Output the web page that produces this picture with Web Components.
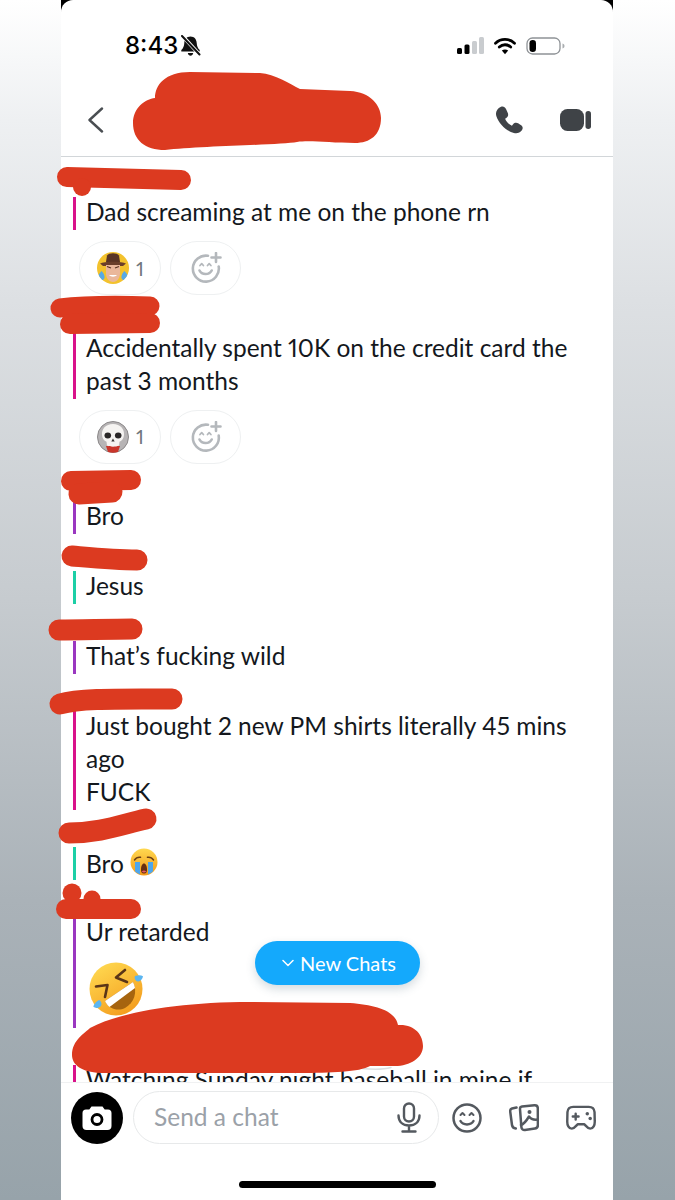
<!DOCTYPE html>
<html>
<head>
<meta charset="utf-8">
<title>Chat</title>
<style>
html,body{margin:0;padding:0}
body{width:675px;height:1200px;overflow:hidden;position:relative;font-family:Lato,"Open Sans",sans-serif;background:linear-gradient(180deg,#ffffff 0,#eef0f2 10%,#dde0e3 25%,#c6cbcf 50%,#aab2b8 75%,#97a3aa 100%)}
</style>
</head>
<body>
<x-phone>
  <x-status-bar slot="top" time="8:43"></x-status-bar>
  <x-chat-header slot="top"></x-chat-header>
  <x-message color="#d9128a">Dad screaming at me on the phone rn
    <x-reactions slot="after">
      <x-reaction count="1"><x-emoji name="bitmoji" size="32"></x-emoji></x-reaction>
      <x-reaction-add></x-reaction-add>
    </x-reactions>
  </x-message>
  <x-message color="#d9128a">Accidentally spent 10K on the credit card the past 3 months
    <x-reactions slot="after">
      <x-reaction count="1"><x-emoji name="skull" size="32"></x-emoji></x-reaction>
      <x-reaction-add></x-reaction-add>
    </x-reactions>
  </x-message>
  <x-message color="#9a37c0">Bro</x-message>
  <x-message color="#1ccfa6">Jesus</x-message>
  <x-message color="#9a37c0">That’s fucking wild</x-message>
  <x-message color="#d9128a">Just bought 2 new PM shirts literally 45 mins ago<br>FUCK</x-message>
  <x-message color="#1ccfa6" emoji>Bro <x-emoji name="cry" size="28"></x-emoji></x-message>
  <x-message color="#9a37c0">Ur retarded<x-emoji slot="media" name="rofl" size="56"></x-emoji></x-message>
  <x-message color="#d9128a">Watching Sunday night baseball in mine if</x-message>
  <x-composer slot="bottom"></x-composer>
  <x-new-chats slot="over">New Chats</x-new-chats>
</x-phone>
<x-redactions></x-redactions>
<script>
const define=(name,css,html,setup)=>{
  customElements.define(name,class extends HTMLElement{
    connectedCallback(){
      if(this.shadowRoot)return;
      const r=this.attachShadow({mode:'open'});
      const body=typeof html==='function'?html(this):html;
      r.innerHTML='<style>'+css+'</style>'+body;
      if(setup)setup(this,r);
    }
  });
};
define('x-phone',`
:host{display:block;position:absolute;left:61px;top:0;width:552px;height:1200px;background:#000}
.screen{position:relative;width:100%;height:100%;background:#fff;border-radius:12px 12px 0 0;display:flex;flex-direction:column;overflow:hidden}
.list{flex:1;min-height:0;overflow:hidden;padding-top:3px;color:#14181d}
`,`<div class="screen"><slot name="top"></slot><div class="list"><slot></slot></div><slot name="bottom"></slot><slot name="over"></slot></div>`);

define('x-status-bar',`
:host{display:flex;align-items:center;justify-content:space-between;height:30px;padding:31px 48px 23px 64px;font-family:Inter,sans-serif;color:#000}
.t{display:flex;align-items:center;gap:2px;font-size:24px;font-weight:500;line-height:30px}
.r{display:flex;align-items:center;gap:10px}
svg{display:block}
`,h=>`<div class="t"><span>${h.getAttribute('time')}</span>
<svg width="21" height="22" viewBox="0 0 21 22"><path d="M10.500 1.500c-3.800 0-6 2.800-6.200 6.400-.2 3.400-1.100 5.200-3 7.100v1.600h18.400V15c-1.900-1.900-2.800-3.700-3-7.100-.2-3.600-2.400-6.400-6.200-6.400z" fill="#111"/><path d="M7.800 18c.3 1.800 1.400 2.800 2.700 2.800s2.400-1 2.700-2.800z" fill="#111"/><path d="M3 1.500 20 20" stroke="#fff" stroke-width="3.600"/><path d="M2 1 19.500 19.500" stroke="#111" stroke-width="2" stroke-linecap="round"/></svg></div>
<div class="r">
<svg width="27" height="18" viewBox="0 0 27 18"><rect x="0" y="11" width="5" height="6" rx="1.500" fill="#000"/><rect x="7.500" y="7.500" width="5" height="9.500" rx="1.500" fill="#000"/><rect x="15" y="4" width="5" height="13" rx="1.500" fill="#c9cccf"/><rect x="22" y="0" width="5" height="17" rx="1.500" fill="#c9cccf"/></svg>
<svg width="22" height="18" viewBox="0 0 22 18" style="margin-right:0"><path d="M1.500 6.200C6.800 1.200 15.200 1.200 20.500 6.200" fill="none" stroke="#000" stroke-width="2.800" stroke-linecap="round"/><path d="M5.300 10C8.600 7 13.400 7 16.700 10" fill="none" stroke="#000" stroke-width="2.800" stroke-linecap="round"/><path d="M7.800 13.600 11 17.300l3.200-3.700c-1.900-1.500-4.500-1.500-6.400 0z" fill="#000"/></svg>
<svg width="39" height="18" viewBox="0 0 39 18"><rect x="1" y="1" width="33" height="16" rx="5.500" fill="#fff" stroke="#8e9296" stroke-width="1.300"/><rect x="3.500" y="3" width="6.500" height="12" rx="3.200" fill="#000"/><path d="M36.500 6.500c1.500.4 2 1.300 2 2.500s-.5 2.100-2 2.500z" fill="#a9adb0"/></svg>
</div>`);

define('x-chat-header',`
:host{display:flex;align-items:center;justify-content:space-between;box-sizing:border-box;height:73px;padding:0 22px 1px 26px;border-bottom:1.500px solid #d2d6d9}
.r{display:flex;align-items:center;gap:37px}
svg{display:block}
`,`<svg width="17" height="26" viewBox="0 0 17 26"><path d="M15 1.500 2.500 13 15 24.500" fill="none" stroke="#4a4e52" stroke-width="2.400" stroke-linecap="round" stroke-linejoin="round"/></svg>
<div class="r">
<svg width="28" height="28" viewBox="0 0 28 28"><path d="M6 .8C8 0 10 .8 11 3l1.800 4c.8 1.900.2 3.800-1.500 4.900l-1.200.9c1.200 3 3.700 5.600 6.800 6.900l1.200-1.500c1.300-1.500 3.300-1.900 5-.9l3 1.900c1.800 1.200 2.100 3.400.8 5-1.900 2.600-5 3.600-8 2.700C10.800 24.700 4 18 1.300 10 .2 6.300 2 2.500 6 .8z" fill="#3f4347"/></svg>
<svg width="31" height="22" viewBox="0 0 31 22"><rect x="0" y="0" width="24" height="22" rx="7.500" fill="#3f4347"/><rect x="25.500" y="2" width="5.500" height="18" rx="2.700" fill="#3f4347"/></svg>
</div>`);

define('x-message',`
:host{display:block;padding-top:37px;font-family:Lato,"Open Sans",sans-serif;font-size:24.500px;line-height:33px;color:#14181d;font-variant-numeric:proportional-nums}
.b{display:flow-root;margin-left:12px;border-left:3px solid var(--c);padding:0 26px 0 10px}
.t{margin:-2px 0 2px}
:host([emoji]) .b{height:33px}
:host([emoji]) .t{margin:0}
`,h=>`<div class="b" style="--c:${h.getAttribute('color')}"><div class="t"><slot></slot></div><slot name="media"></slot></div><slot name="after"></slot>`);

define('x-reactions',`
:host{display:flex;gap:9px;margin:11px 0 0 18px;height:54.500px}
`,`<slot></slot>`);

define('x-reaction',`
:host{box-sizing:border-box;display:flex;align-items:center;gap:7px;width:82px;height:54px;padding-left:17px;border:1.500px solid #eef0f1;border-radius:27px;font-family:Lato,sans-serif;font-size:20px;color:#70767c}
`,h=>`<slot></slot><span>${h.getAttribute('count')}</span>`);

define('x-reaction-add',`
:host{box-sizing:border-box;display:flex;align-items:center;justify-content:center;width:71px;height:54px;border:1.500px solid #eef0f1;border-radius:27px}
svg{display:block}
`,`<svg width="32" height="32" viewBox="0 0 32 32" fill="none" stroke="#b4b8bc" stroke-width="2.600" stroke-linecap="round" stroke-linejoin="round"><path d="M18 3.800A13 13 0 1 0 28.700 14.500"/><path d="M26 1v9M21.500 5.500h9"/><path d="M10 13.500l1.700-1.800 1.700 1.800M17.500 13.500l1.700-1.800 1.700 1.800" stroke-width="1.800"/><path d="M9.500 18.500c2.300 4.700 9.800 4.700 12.200 0"/></svg>`);

const emojis={
bitmoji:`<svg viewBox="0 0 32 32"><defs><clipPath id="cb"><circle cx="16" cy="16" r="16"/></clipPath></defs><g clip-path="url(#cb)"><rect width="32" height="32" fill="#f3c22d"/><path d="M10 3.500C12 .5 20 .5 22 3.500l1 6.500H9z" fill="#5a3424"/><path d="M3 11.500c4-2.500 22-2.500 26 0l-3 2.500H6z" fill="#6b3f2a"/><path d="M9 13h14v8c0 5.500-3 9-7 9s-7-3.500-7-9z" fill="#eab79a"/><path d="M10 14.500l4 1.500M22 14.500l-4 1.500" stroke="#5a3424" stroke-width="1.300"/><path d="M12 23c2 2.300 6 2.300 8 0z" fill="#fff"/><path d="M4.500 19c2 2 3.800 5 2.800 7.500-1 2.300-4.300 2.300-5.800.5C-.500 24.500 2.500 21.500 4.500 19zM27.500 19c-2 2-3.800 5-2.800 7.500 1 2.300 4.300 2.300 5.800.5 2-2.500-1-5.500-3-8z" fill="#57a9e6"/></g></svg>`,
skull:`<svg viewBox="0 0 32 32"><circle cx="16" cy="16" r="15.500" fill="#b7b4b5" stroke="#8b8889"/><path d="M9 25h14l-2 6c-3 1-7 1-10 0z" fill="#c9352b"/><path d="M16 3C8.500 3 4.500 8 5 14c.2 3.500 2 5.500 4.500 6.800l.5 3.700c3.500 1.600 8.500 1.600 12 0l.5-3.700C25 19.500 26.800 17.500 27 14c.5-6-3.500-11-11-11z" fill="#f5f3f1"/><ellipse cx="10.800" cy="14.500" rx="3.300" ry="3" fill="#2a2727"/><ellipse cx="21.200" cy="14.500" rx="3.300" ry="3" fill="#2a2727"/><path d="M16 17.500l-1.700 3h3.400z" fill="#3a3737"/></svg>`,
cry:`<svg viewBox="0 0 28 28"><defs><linearGradient id="y1" x1="0" y1="0" x2="0" y2="1"><stop offset="0" stop-color="#ffd84f"/><stop offset="1" stop-color="#f49a1a"/></linearGradient></defs><circle cx="14" cy="14" r="13.500" fill="url(#y1)"/><path d="M4.500 12c1.500-2.200 4-3 6-2.700M23.500 12c-1.500-2.200-4-3-6-2.700" fill="none" stroke="#6b3d12" stroke-width="1.500" stroke-linecap="round"/><path d="M5 14h5v12.500c-2-.7-3.800-1.800-5-3.200zM18 14h5v9.300c-1.200 1.400-3 2.500-5 3.200z" fill="#4ea6ec"/><path d="M11 21.500c0-3.500 1.300-6 3-6s3 2.500 3 6-1.300 4-3 4-3-.5-3-4z" fill="#6a2f10"/><path d="M11.800 23.500c1.100-1.300 3.300-1.300 4.400 0-.9 1.300-3.500 1.300-4.400 0z" fill="#e4596b"/></svg>`,
rofl:`<svg viewBox="0 0 56 56"><defs><linearGradient id="y2" x1=".2" y1="0" x2=".8" y2="1"><stop offset="0" stop-color="#ffd950"/><stop offset="1" stop-color="#f39a1c"/></linearGradient></defs><circle cx="28" cy="27" r="26.500" fill="url(#y2)"/><path d="M37 8 28 15.500 39 20" fill="none" stroke="#5a3517" stroke-width="2.600" stroke-linecap="round" stroke-linejoin="round"/><path d="M8 24.500 19.500 23 17 35" fill="none" stroke="#5a3517" stroke-width="2.600" stroke-linecap="round" stroke-linejoin="round"/><path d="M17 39 45 20c5 10 1 21-8 26-8 4-17-0-20-7z" fill="#a6640f"/><path d="M17 39 45 20c1 1.900 1.700 3.900 2 5.900L21.500 45c-1.900-1.700-3.500-3.700-4.500-6z" fill="#fff"/><path d="M47 14c3-1 6-1 8 .2-.3 2.500-2 4.600-4.500 5.200-2.700.500-4.700-3-3.500-5.400z" fill="#5bb5f0"/><path d="M11 38c-2.700 1.500-4.800 3.800-5.700 6.500 1.900 1.700 4.500 2 6.600.6 2.500-1.800 1.800-5.800-.9-7.100z" fill="#5bb5f0"/></svg>`
};
define('x-emoji',`
:host{display:inline-block;vertical-align:middle;line-height:0}
:host([slot=media]){display:block;padding:12px 0 10px 2px}
:host([name=cry]){vertical-align:-3px}
svg{display:block;width:var(--s);height:var(--s)}
`,h=>`<div style="--s:${h.getAttribute('size')}px">${emojis[h.getAttribute('name')]}</div>`);

define('x-composer',`
:host{display:block;box-sizing:border-box;height:118px;background:#fff;border-top:1px solid #f0f1f2;position:relative}
.row{display:flex;align-items:center;padding:8px 0 0 10px;height:53px}
.cam{flex:none;width:52px;height:52px;border-radius:50%;background:#000;display:flex;align-items:center;justify-content:center}
.input{flex:none;box-sizing:border-box;width:306px;height:53px;margin-left:10px;border:1.500px solid #e7e9ea;border-radius:27px;display:flex;align-items:center;justify-content:space-between;padding:0 17px 2px 20px;font-family:Lato,sans-serif;font-size:24.500px;color:#9ba1a8}
.input svg{margin-top:2px}
.icons{display:flex;align-items:center;gap:27px;margin-left:13px}
svg{display:block}
.home{width:197px;height:7px;border-radius:4px;background:#000;margin:37px auto 0}
`,`<div class="row">
<div class="cam"><svg width="30" height="26" viewBox="0 0 30 26"><path d="M9.500 1.500h11l2.200 3H26c2.200 0 3.500 1.300 3.500 3.500v13c0 2.500-1.500 4-4 4h-21c-2.500 0-4-1.500-4-4V8c0-2.200 1.300-3.500 3.500-3.500h3.300z" fill="#fff"/><circle cx="15" cy="14.500" r="5" fill="none" stroke="#000" stroke-width="2.800"/></svg></div>
<div class="input"><span>Send a chat</span>
<svg width="24" height="31" viewBox="0 0 24 31" fill="none" stroke="#54595f" stroke-width="2.400" stroke-linecap="round"><rect x="7" y="1.500" width="10" height="18" rx="5"/><path d="M1.500 13.500c0 6.500 4.500 10 10.500 10s10.500-3.500 10.500-10M12 23.500v6M5.500 29.500h13"/></svg></div>
<div class="icons">
<svg width="30" height="30" viewBox="0 0 30 30" fill="none" stroke="#54595f" stroke-width="2.500" stroke-linecap="round" stroke-linejoin="round"><circle cx="15" cy="15" r="13.500"/><path d="M8.500 12l2-2 2 2M17.500 12l2-2 2 2" stroke-width="2"/><path d="M8.500 18c2.500 4.500 10.500 4.500 13 0"/></svg>
<svg width="30" height="28" viewBox="0 0 30 28" fill="none" stroke="#54595f" stroke-width="2.500" stroke-linecap="round" stroke-linejoin="round"><path d="M7.500 3.500 3 4.500C1.500 5 1 6 1.200 7.500L3 21c.3 2 1.300 3.200 3.800 3.500"/><path d="M13 2.500 25.500 1.300c2-.1 3.200.8 3.300 2.700l.1 17c0 2-1 3.300-3 3.600l-10 1.400c-2 .2-3.300-.9-3.500-2.900L11 5.200c-.1-1.600.5-2.500 2-2.700z"/><path d="M12 21c3-1 5-3.500 8-8.500 2 3 5 3.500 9 3"/><circle cx="20.500" cy="8" r="2" fill="#54595f" stroke="none"/></svg>
<svg width="30" height="26" viewBox="0 0 31 26" fill="none" stroke="#54595f" stroke-width="2.500" stroke-linecap="round" stroke-linejoin="round"><path d="M7.500 1.500h16c3.500 0 5.700 2 6 5.500l.2 9c.2 4.500-1.500 8-4.700 8-2.500 0-4-2.500-6-4.500h-7c-2 2-3.500 4.500-6 4.500-3.200 0-4.900-3.500-4.700-8L1.500 7c.3-3.500 2.500-5.500 6-5.500z"/><path d="M10 8.500v6M7 11.500h6"/><circle cx="22" cy="8.500" r="1.800" fill="#54595f" stroke="none"/><circle cx="25" cy="13.500" r="1.800" fill="#54595f" stroke="none"/></svg>
</div></div><div class="home"></div>`);

define('x-new-chats',`
:host{position:absolute;left:194px;top:941px;box-sizing:border-box;width:165px;height:44px;padding-left:27px;display:flex;align-items:center;gap:6px;border-radius:22px;background:#14a9fc;box-shadow:0 4px 10px rgba(60,90,110,.22);color:#fff;font-family:Lato,sans-serif;font-size:20px}
svg{display:block}
`,`<svg width="12" height="8" viewBox="0 0 12 8"><path d="M1 1.500 6 6.500 11 1.500" fill="none" stroke="#fff" stroke-width="1.500" stroke-linecap="round" stroke-linejoin="round"/></svg><slot></slot>`);

define('x-redactions',`
:host{position:absolute;left:0;top:0;width:675px;height:1200px;pointer-events:none;display:block}
svg{display:block}
`,`<svg width="675" height="1200" viewBox="0 0 675 1200" fill="none" stroke="#dc3a20" stroke-linecap="round" stroke-linejoin="round">
<path d="M362 1068.500c10 1 22 1 29-1" stroke="#dcdfe1" stroke-width="1.500"/>
<path d="M133 123C133 108 145 99 155 98 155 85 165 72 190 72L260 73C275 74 290 84 300 89L350 91C370 92 381 105 381 118 381 135 370 143 355 143 330 143 310 140 297 142 280 145 200 146 165 150 145 150 133 140 133 123Z" fill="#dc3a20" stroke="none"/>
<path d="M67 177 181 180" stroke-width="20"/><circle cx="82" cy="187" r="9" fill="#dc3a20" stroke="none"/>
<path d="M60 308C85 305 120 305 150 306" stroke-width="19"/><path d="M70 324 150 323" stroke-width="20"/>
<path d="M71 481 131 480" stroke-width="20"/><path d="M79 494 112 492" stroke-width="21"/>
<path d="M72 556C95 558 115 560 137 560" stroke-width="21"/>
<path d="M59 630C80 630 110 629 132 629" stroke-width="21"/>
<path d="M60 704C80 698 120 699 172 699" stroke-width="21"/>
<path d="M69 833C100 833 120 825 146 819" stroke-width="21"/>
<circle cx="72" cy="893" r="9.500" fill="#dc3a20" stroke="none"/><circle cx="92" cy="899" r="8.500" fill="#dc3a20" stroke="none"/><path d="M66 909 131 909" stroke-width="20"/>
<path d="M72 1055C72 1040 85 1033 90 1028 120 1012 180 1002 250 1002L350 1003C375 1005 395 1010 398 1025 415 1024 423 1035 423 1046 423 1058 410 1066 395 1066L370 1066C360 1072 330 1073 300 1073L100 1073C82 1072 72 1065 72 1055Z" fill="#dc3a20" stroke="none"/>
</svg>`);
</script>
</body>
</html>
